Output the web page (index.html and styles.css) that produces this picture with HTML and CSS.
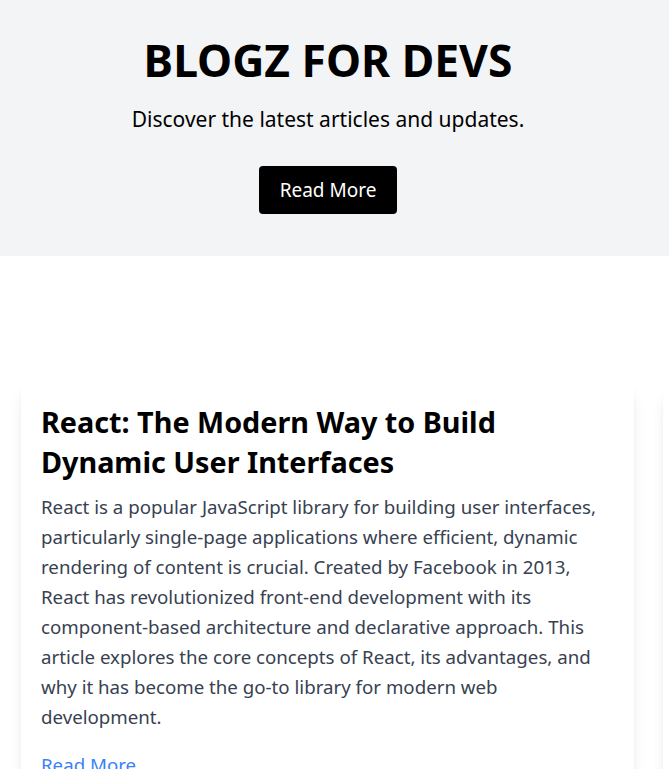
FILE: index.html
```html
<!DOCTYPE html>
<html lang="en">
<head>
<meta charset="utf-8">
<title>Blogz for Devs</title>
<link rel="stylesheet" href="styles.css">
</head>
<body>
<header class="hero">
  <h1 class="hero-title">BLOGZ FOR DEVS</h1>
  <p class="hero-sub">Discover the latest articles and updates.</p>
  <a class="hero-btn" href="#">Read More</a>
</header>
<main class="slider">
  <div class="track">
    <article class="card">
      <h2 class="card-title">React: The Modern Way to Build Dynamic User Interfaces</h2>
      <p class="card-text">React is a popular JavaScript library for building user interfaces, particularly single-page applications where efficient, dynamic rendering of content is crucial. Created by Facebook in 2013, React has revolutionized front-end development with its component-based architecture and declarative approach. This article explores the core concepts of React, its advantages, and why it has become the go-to library for modern web development.</p>
      <a class="card-link" href="#">Read More</a>
    </article>
    <article class="card card-next" aria-hidden="true"></article>
  </div>
</main>
</body>
</html>
```
FILE: styles.css
```css
* { box-sizing: border-box; }
html, body { margin: 0; padding: 0; }
body {
  font-family: "Noto Sans", "Open Sans", sans-serif;
  background: #ffffff;
  color: #000;
  overflow: hidden;
}
.hero {
  background: #f3f4f6;
  padding: 36px 33px 42px 20px;
  text-align: center;
}
.hero-title {
  margin: 0;
  font-size: 44.4px;
  line-height: 48px;
  font-weight: 700;
}
.hero-sub {
  margin: 21px 0 0;
  font-size: 21px;
  line-height: 28px;
}
.hero-btn {
  display: inline-block;
  margin-top: 33px;
  background: #000;
  color: #fff;
  text-decoration: none;
  font-size: 19px;
  line-height: 28px;
  padding: 10px 21px;
  border-radius: 4px;
}
.slider {
  padding-top: 126px;
  overflow: hidden;
}
.track {
  display: flex;
  gap: 29px;
  padding-left: 21px;
  align-items: flex-start;
}
.card {
  flex: 0 0 613px;
  background: #fff;
  border-radius: 8px;
  box-shadow: 0 10px 15px -3px rgba(0,0,0,0.1), 0 4px 6px -4px rgba(0,0,0,0.1);
  padding: 20px 20px 24px;
}
.card-next {
  margin-top: 6px;
  height: 500px;
}
.card-title {
  margin: 0 0 10px;
  font-size: 28.75px;
  line-height: 40px;
  font-weight: 700;
}
.card-text {
  margin: 0;
  font-size: 18.7px;
  line-height: 30px;
  color: #374151;
}
.card-link {
  display: inline-block;
  margin-top: 19px;
  font-size: 18.7px;
  line-height: 28px;
  color: #3b82f6;
  text-decoration: none;
}
```
